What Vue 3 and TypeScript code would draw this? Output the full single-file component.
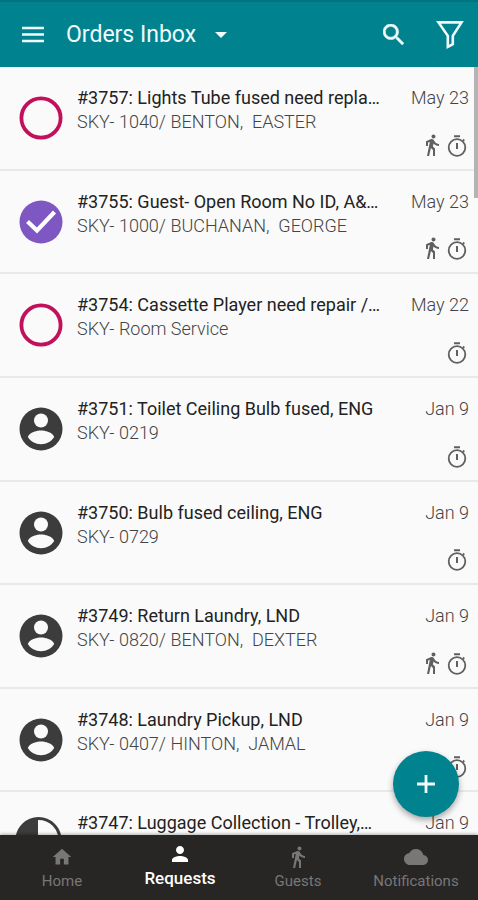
<script setup lang="ts">
import { ref } from 'vue'

type Status = 'open' | 'done' | 'assigned' | 'progress'

interface Order {
  id: number
  title: string
  place: string
  date: string
  status: Status
  guest: boolean
}

const orders: Order[] = [
  { id: 3757, title: 'Lights Tube fused need repla…', place: 'SKY- 1040/ BENTON,  EASTER', date: 'May 23', status: 'open', guest: true },
  { id: 3755, title: 'Guest- Open Room No ID, A&…', place: 'SKY- 1000/ BUCHANAN,  GEORGE', date: 'May 23', status: 'done', guest: true },
  { id: 3754, title: 'Cassette Player need repair /…', place: 'SKY- Room Service', date: 'May 22', status: 'open', guest: false },
  { id: 3751, title: 'Toilet Ceiling Bulb fused, ENG', place: 'SKY- 0219', date: 'Jan 9', status: 'assigned', guest: false },
  { id: 3750, title: 'Bulb fused ceiling, ENG', place: 'SKY- 0729', date: 'Jan 9', status: 'assigned', guest: false },
  { id: 3749, title: 'Return Laundry, LND', place: 'SKY- 0820/ BENTON,  DEXTER', date: 'Jan 9', status: 'assigned', guest: true },
  { id: 3748, title: 'Laundry Pickup, LND', place: 'SKY- 0407/ HINTON,  JAMAL', date: 'Jan 9', status: 'assigned', guest: false },
  { id: 3747, title: 'Luggage Collection - Trolley,…', place: '', date: 'Jan 9', status: 'progress', guest: false },
]

const walkPath =
  'M13.5 5.5c1.1 0 2-.9 2-2s-.9-2-2-2-2 .9-2 2 .9 2 2 2zM9.8 8.9L7 23h2.1l1.8-8 2.1 2v6h2v-7.5l-2.1-2 .6-3C14.8 12 16.8 13 19 13v-2c-1.9 0-3.5-1-4.3-2.4l-1-1.6c-.4-.6-1-1-1.7-1-.3 0-.5.1-.8.1L6 8.3V13h2V9.6l1.8-.7'

const tabs = [
  { name: 'Home', box: '-1 -1 26 26', path: 'M10 20v-6h4v6h5v-8h3L12 3 2 12h3v8z' },
  { name: 'Requests', box: '0 0 24 24', path: 'M12 12c2.21 0 4-1.79 4-4s-1.79-4-4-4-4 1.79-4 4 1.79 4 4 4zm0 2c-2.67 0-8 1.34-8 4v2h16v-2c0-2.66-5.33-4-8-4z' },
  { name: 'Guests', box: '0 0 24 24', path: walkPath },
  { name: 'Notifications', box: '0 0 24 24', path: 'M19.35 10.04C18.67 6.59 15.64 4 12 4 9.11 4 6.6 5.64 5.35 8.04 2.34 8.36 0 10.91 0 14c0 3.31 2.69 6 6 6h13c2.76 0 5-2.24 5-5 0-2.64-2.05-4.78-4.65-4.96z' },
]
const active = ref('Requests')
</script>

<template>
  <div class="app">
    <header class="bar">
      <button class="icon-btn" type="button" aria-label="Menu">
        <svg class="menu" viewBox="0 0 24 18" aria-hidden="true">
          <path d="M1 2h22M1 8.500h22M1 15h22" fill="none" stroke="currentColor" stroke-width="2.6" />
        </svg>
      </button>
      <button class="mailbox" type="button">
        <h1>Orders Inbox</h1>
        <svg class="caret" viewBox="0 0 12 6" aria-hidden="true"><path d="M0 0h12L6 6z" fill="currentColor" /></svg>
      </button>
      <button class="icon-btn search" type="button" aria-label="Search">
        <svg class="glass" viewBox="3 3 17.5 17.5" aria-hidden="true">
          <path stroke="currentColor" stroke-width=".4" fill="currentColor" d="M15.5 14h-.79l-.28-.27C15.41 12.59 16 11.11 16 9.5 16 5.91 13.09 3 9.5 3S3 5.91 3 9.5 5.91 16 9.5 16c1.61 0 3.09-.59 4.23-1.57l.27.28v.79l5 4.99L20.49 19l-4.99-5zm-6 0C7.01 14 5 11.99 5 9.5S7.01 5 9.5 5 14 7.01 14 9.5 11.99 14 9.5 14z" />
        </svg>
      </button>
      <button class="icon-btn" type="button" aria-label="Filter">
        <svg class="funnel" viewBox="0 0 28 28" aria-hidden="true">
          <path d="M2.500 1.400h23L16.800 14.800v8.400l-5 2.600V14.800z" fill="none" stroke="currentColor" stroke-width="2.6" />
        </svg>
      </button>
    </header>

    <main class="content">
      <ul class="list">
        <li v-for="order in orders" :key="order.id" class="row">
          <svg v-if="order.status === 'open'" class="status" viewBox="0 0 44 44" role="img" aria-label="Open">
            <circle cx="22" cy="22" r="19.6" fill="none" stroke="#c2115c" stroke-width="3.8" />
          </svg>
          <svg v-else-if="order.status === 'done'" class="status" viewBox="0 0 44 44" role="img" aria-label="Done">
            <circle cx="22" cy="22" r="21.5" fill="#7e57c2" />
            <path d="M8.5 21.5l9.500 9L35.500 12" fill="none" stroke="#fff" stroke-width="4.200" />
          </svg>
          <svg v-else-if="order.status === 'assigned'" class="status" viewBox="0 0 44 44" role="img" aria-label="Assigned">
            <circle cx="22" cy="22" r="21.5" fill="#3c3c3c" />
            <circle cx="22" cy="13.500" r="7" fill="#fafafa" />
            <path d="M8.800 30c1.500-4.300 7.700-6.500 13.200-6.500s11.700 2.200 13.200 6.500c-2.700 4.500-7.600 7.200-13.200 7.200s-10.500-2.700-13.200-7.200z" fill="#fafafa" />
          </svg>
          <svg v-else class="status" viewBox="0 0 44 44" role="img" aria-label="In progress">
            <circle cx="19.500" cy="19" r="21.500" fill="none" stroke="#3c3c3c" stroke-width="3" />
            <path d="M19-2.500a21.500 21.500 0 0 0 0 43z" fill="#3c3c3c" />
          </svg>
          <div class="text">
            <h2>#{{ order.id }}: {{ order.title }}</h2>
            <p>{{ order.place }}</p>
          </div>
          <div class="meta">
            <time>{{ order.date }}</time>
            <div class="flags">
              <svg v-if="order.guest" class="walk" viewBox="5 1 15 23" role="img" aria-label="Guest request">
                <path :d="walkPath" fill="currentColor" />
              </svg>
              <svg class="timer" viewBox="0 0 20 24" role="img" aria-label="Timed">
                <path d="M7 2.200h6M10 9v6" fill="none" stroke="currentColor" stroke-width="2" />
                <path d="M16 6.800l1.300-1.300" fill="none" stroke="currentColor" stroke-width="1.800" />
                <circle cx="10" cy="13.500" r="8.300" fill="none" stroke="currentColor" stroke-width="1.800" />
              </svg>
            </div>
          </div>
        </li>
      </ul>
      <div class="thumb"></div>
      <button class="fab" type="button" aria-label="New request">
        <svg viewBox="0 0 18 18" aria-hidden="true"><path d="M9 0v18M0 9h18" stroke="currentColor" stroke-width="2.800" /></svg>
      </button>
    </main>

    <nav class="tabs">
      <button
        v-for="tab in tabs"
        :key="tab.name"
        type="button"
        class="tab"
        :class="{ active: tab.name === active }"
        @click="active = tab.name"
      >
        <svg :viewBox="tab.box" aria-hidden="true"><path :d="tab.path" fill="currentColor" /></svg>
        <span>{{ tab.name }}</span>
      </button>
    </nav>
  </div>
</template>

<style>
body {
  margin: 0;
  background: #fafafa;
}
</style>

<style scoped>
.app {
  display: flex;
  flex-direction: column;
  height: 100vh;
  overflow: hidden;
  background: #fafafa;
  font-family: Roboto, 'Liberation Sans', sans-serif;
}
svg {
  display: block;
  flex: none;
}
button {
  padding: 0;
  border: 0;
  background: none;
  color: inherit;
  font: inherit;
  cursor: pointer;
}
.bar {
  display: flex;
  align-items: center;
  flex: none;
  box-sizing: border-box;
  height: 67px;
  padding: 0 14px 0 21px;
  border-top: 2px solid #00737f;
  background: #00838f;
  color: #f1fbfc;
}
.menu {
  width: 24px;
  height: 18px;
}
.mailbox {
  display: flex;
  align-items: center;
  gap: 19px;
  margin-left: 21px;
}
.mailbox h1 {
  margin: 0;
  font-size: 23px;
  font-weight: 400;
  line-height: 32px;
}
.caret {
  width: 12px;
  height: 6px;
}
.search {
  margin-left: auto;
  margin-right: 32px;
}
.glass {
  width: 21px;
  height: 21px;
}
.funnel {
  width: 28px;
  height: 28px;
}
.content {
  position: relative;
  flex: 1;
  min-height: 0;
  overflow: hidden;
}
.list {
  display: grid;
  grid-auto-rows: 1fr;
  box-sizing: border-box;
  min-height: 829px;
  margin: 0;
  padding: 0;
  list-style: none;
}
.row {
  display: flex;
  box-sizing: border-box;
  padding: 19px 9px 11px 19px;
  border-bottom: 2px solid #e9e9e9;
}
.status {
  width: 44px;
  height: 44px;
  margin-top: 10px;
  overflow: visible;
}
.text {
  flex: 1;
  min-width: 0;
  margin-left: 14px;
}
.text h2,
.text p {
  margin: 0;
  font-size: 18px;
  line-height: 24px;
  white-space: pre;
}
.text h2 {
  color: #222;
  font-weight: 400;
}
.text p {
  color: #444;
  font-weight: 300;
}
.meta {
  display: flex;
  flex-direction: column;
  align-items: flex-end;
  justify-content: space-between;
  color: #606060;
}
.meta time {
  color: #444;
  font-size: 18px;
  font-weight: 300;
  line-height: 24px;
}
.flags {
  display: flex;
  gap: 7px;
  padding-right: 2px;
}
.walk {
  width: 15px;
  height: 23px;
}
.timer {
  width: 20px;
  height: 24px;
}
.thumb {
  position: absolute;
  top: 0;
  right: 0;
  width: 4px;
  height: 131px;
  background: #b4b4b4;
}
.fab {
  position: absolute;
  right: 19px;
  bottom: 18px;
  display: grid;
  place-items: center;
  width: 66px;
  height: 66px;
  border-radius: 50%;
  background: #00838f;
  color: #f1fbfc;
  box-shadow: 0 3px 6px rgba(0, 0, 0, 0.35);
}
.fab svg {
  width: 18px;
  height: 18px;
}
.tabs {
  display: grid;
  grid-template-columns: repeat(4, 1fr);
  flex: none;
  box-sizing: border-box;
  height: 65px;
  padding: 0 3px;
  background: #272625;
  box-shadow: 0 -1px 3px rgba(0, 0, 0, 0.3);
  z-index: 1;
}
.tab {
  display: flex;
  flex-direction: column;
  align-items: center;
  gap: 2px;
  padding-top: 10px;
  color: #777;
  font-size: 15px;
  line-height: 20px;
}
.tab svg {
  width: 24px;
  height: 24px;
}
.tab.active {
  padding-top: 7px;
  color: #fff;
  font-size: 17px;
  font-weight: 500;
}
</style>
